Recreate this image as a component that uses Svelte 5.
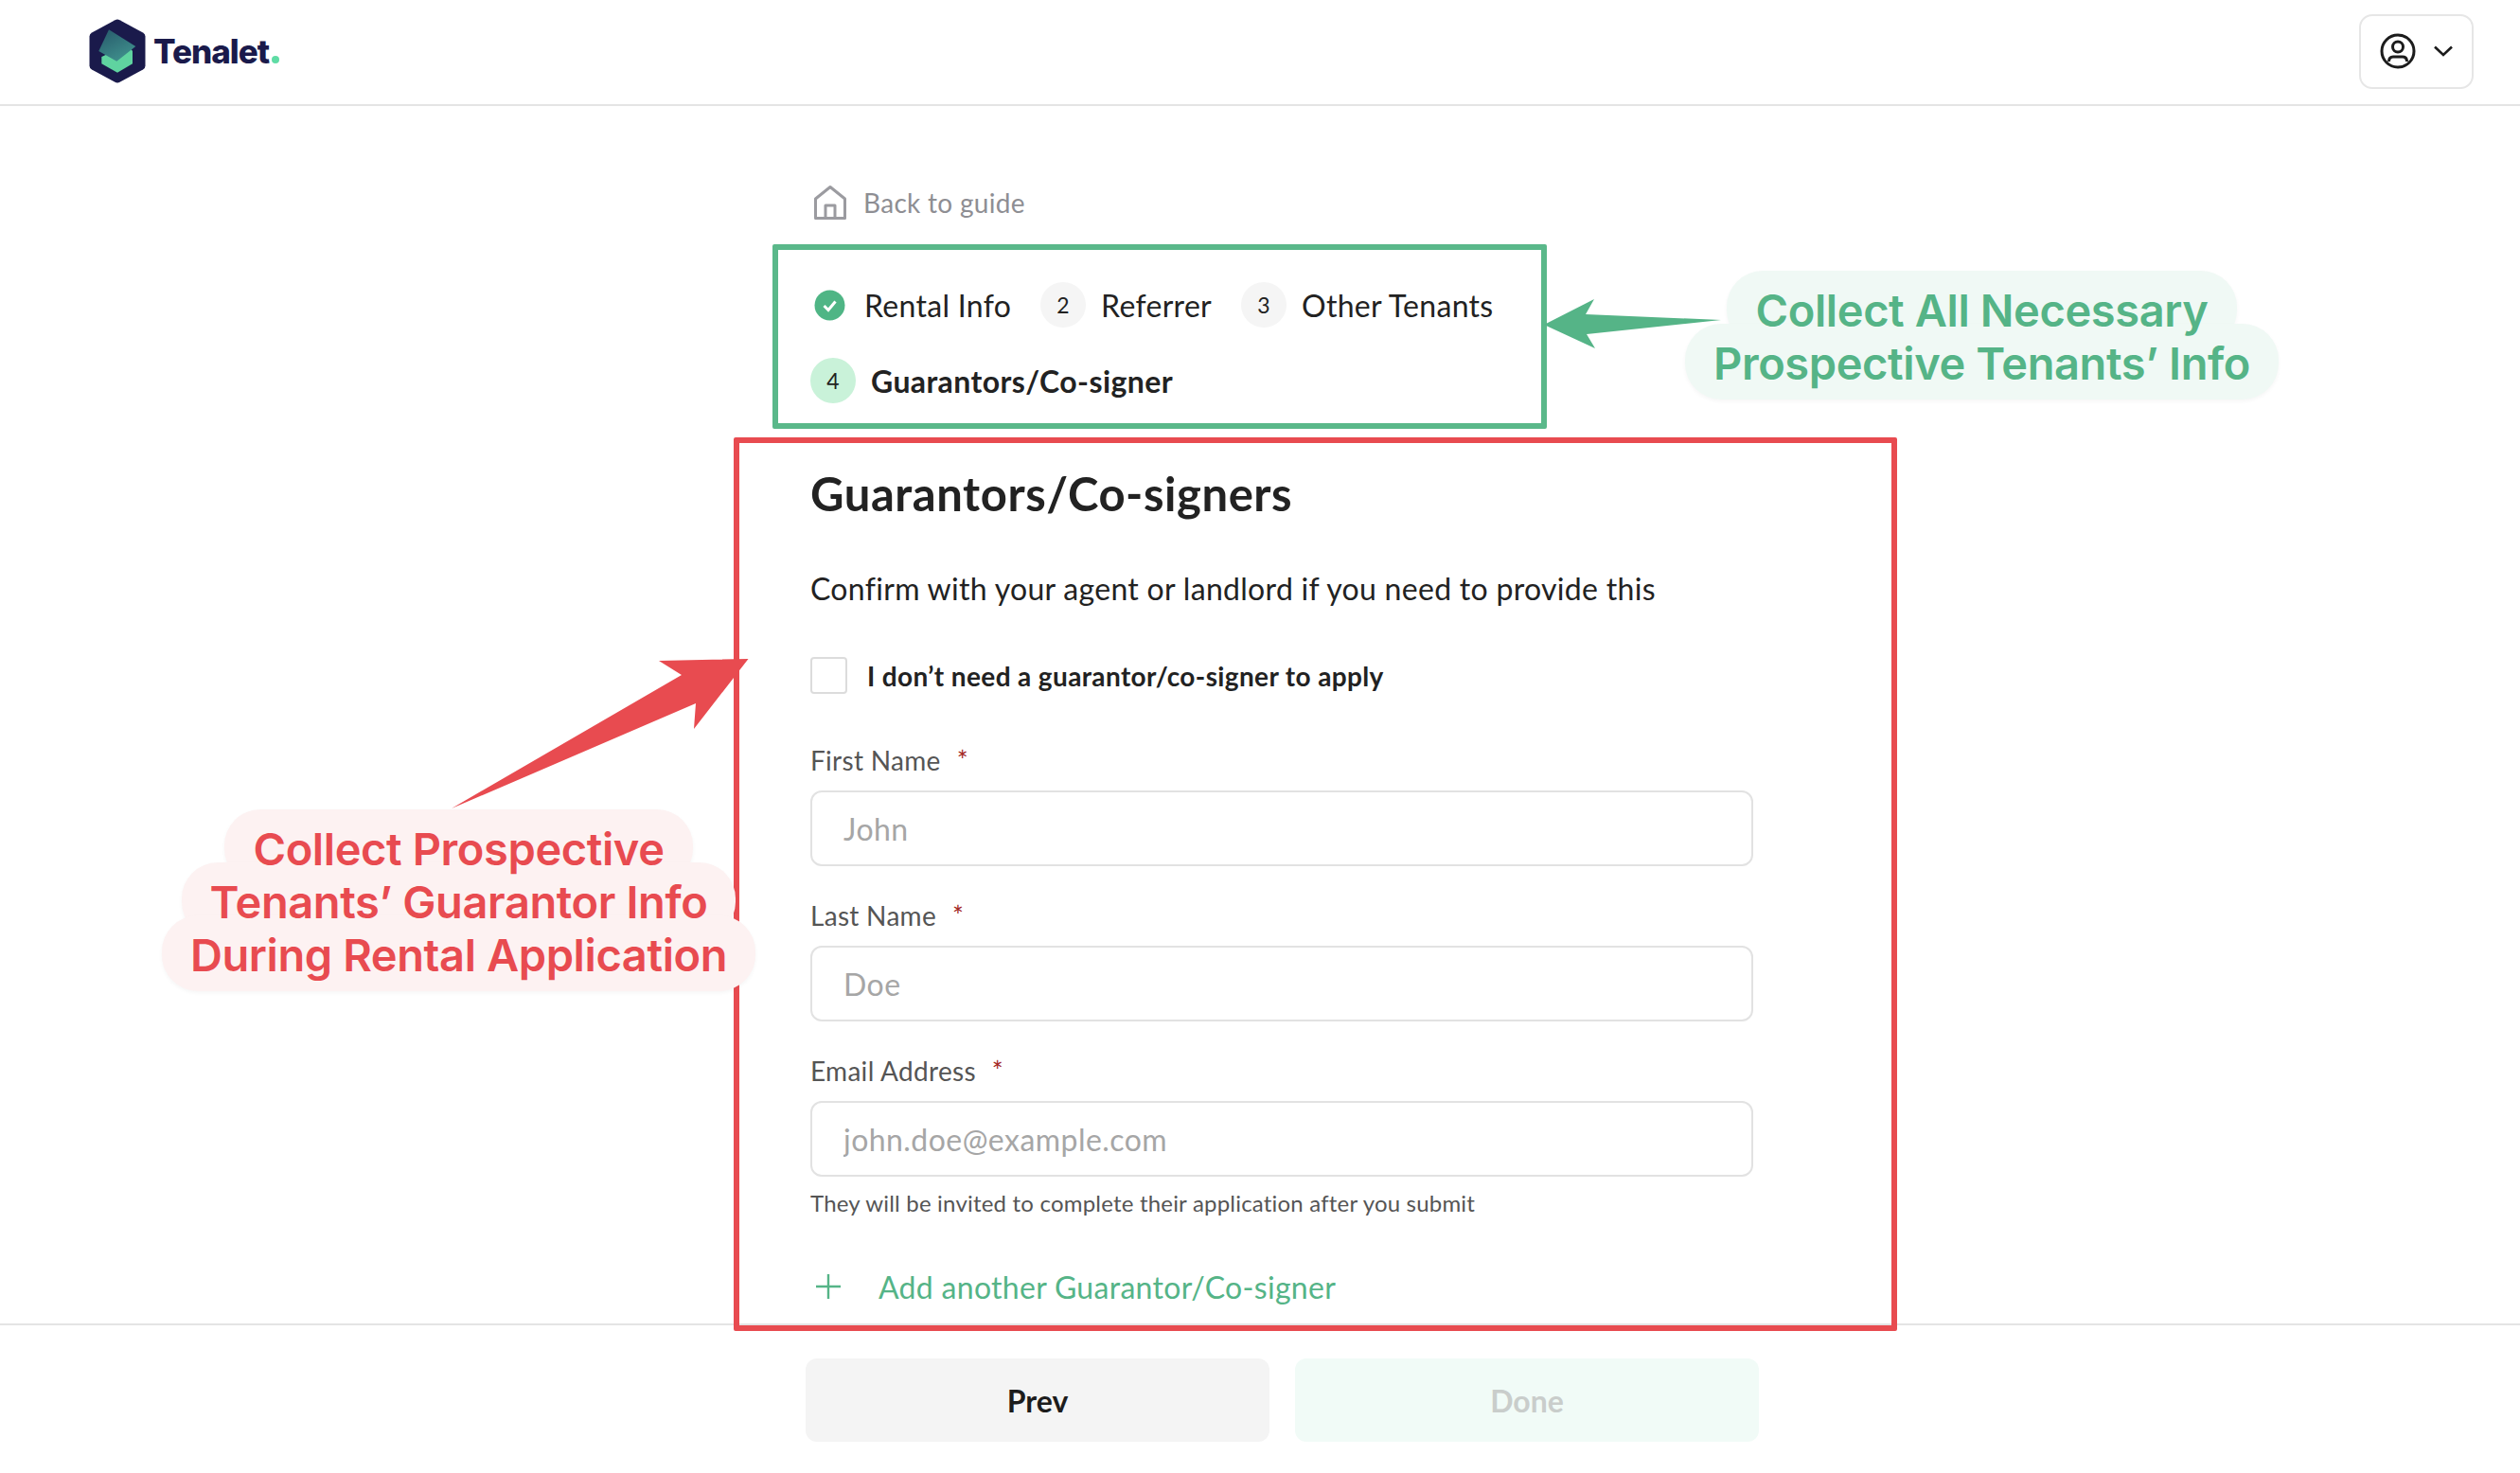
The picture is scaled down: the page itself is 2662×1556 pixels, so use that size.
<script>
    const fields = [
        { label: "First Name", placeholder: "John" },
        { label: "Last Name", placeholder: "Doe" },
        { label: "Email Address", placeholder: "john.doe@example.com" }
    ];
    const steps = [
        { n: 2, label: "Referrer" },
        { n: 3, label: "Other Tenants" }
    ];
</script>

<div class="page">
    <header class="topbar">
        <div class="brand">
            <svg class="logo" width="60" height="68" viewBox="0 0 60 68">
                <defs>
                    <linearGradient id="roof" x1="0" y1="0" x2="0.6" y2="1">
                        <stop offset="0" stop-color="#26586a" />
                        <stop offset="1" stop-color="#3f8f8c" />
                    </linearGradient>
                </defs>
                <path d="M27.5 1.2 Q30 0 32.5 1.2 L57 14.6 Q59.5 16 59.5 18.6 V49.4 Q59.5 52 57 53.4 L32.5 66.8 Q30 68 27.5 66.8 L3 53.4 Q0.5 52 0.5 49.4 V18.6 Q0.5 16 3 14.6 Z" fill="#1a1a4b" />
                <path d="M13.3 40 L41 27.3 L46 34 V47.3 L30 56.7 L13.3 47.3 Z" fill="#5fd3a0" />
                <path d="M21 11.3 L49.3 29 L29.3 44.7 L10.3 34 Z" fill="url(#roof)" />
            </svg>
            <span class="wordmark">Tenalet<span class="dot"></span></span>
        </div>
        <button class="account" aria-label="Account">
            <svg width="38" height="38" viewBox="0 0 38 38" fill="none" stroke="#1c1c1c" stroke-width="3">
                <circle cx="19" cy="19" r="17" />
                <circle cx="19" cy="14.5" r="5.5" />
                <path d="M9.5 30 Q9.5 25 14 25 H24 Q28.5 25 28.5 30" />
            </svg>
            <svg width="22" height="14" viewBox="0 0 22 14" fill="none" stroke="#1c1c1c" stroke-width="2.6">
                <path d="M2 2.5 L11 11 L20 2.5" />
            </svg>
        </button>
    </header>

    <main class="content">
        <a class="back" href="#guide">
            <svg width="36" height="38" viewBox="0 0 36 38" fill="none" stroke="#9b9ba0" stroke-width="3" stroke-linejoin="round">
                <path d="M2.5 35.5 V15 L18 2.5 L33.5 15 V35.5 Z" />
                <path d="M13 35.5 V22 H23 V35.5" />
            </svg>
            <span>Back to guide</span>
        </a>

        <nav class="steps">
            <div class="step-row">
                <div class="step done">
                    <svg width="33" height="33" viewBox="0 0 33 33">
                        <circle cx="16.5" cy="16.5" r="16" fill="#4fb585" />
                        <path d="M10.5 17 L15 21.5 L22.5 12.5" fill="none" stroke="#fff" stroke-width="3" />
                    </svg>
                    <span>Rental Info</span>
                </div>
                {#each steps as step}
                    <div class="step">
                        <span class="num">{step.n}</span>
                        <span>{step.label}</span>
                    </div>
                {/each}
            </div>
            <div class="step current">
                <span class="num">4</span>
                <span>Guarantors/Co-signer</span>
            </div>
        </nav>

        <h1>Guarantors/Co-signers</h1>
        <p class="intro">Confirm with your agent or landlord if you need to provide this</p>

        <label class="skip">
            <input type="checkbox" />
            <span>I don’t need a guarantor/co-signer to apply</span>
        </label>

        <div class="fields">
            {#each fields as field}
                <div class="field">
                    <label for={field.label}>{field.label}<span class="req">*</span></label>
                    <input id={field.label} type="text" placeholder={field.placeholder} />
                </div>
            {/each}
        </div>
        <p class="hint">They will be invited to complete their application after you submit</p>

        <button class="add">
            <svg width="28" height="28" viewBox="0 0 28 28" stroke="#55b487" stroke-width="2.4">
                <path d="M14 1 V27 M1 14 H27" />
            </svg>
            <span>Add another Guarantor/Co-signer</span>
        </button>
    </main>

    <footer class="actions">
        <button class="prev">Prev</button>
        <button class="next" disabled>Done</button>
    </footer>

    <!-- annotations drawn over the screenshot -->
    <div class="mark mark-green"></div>
    <div class="mark mark-red"></div>
    <svg class="arrows" width="2662" height="1556" viewBox="0 0 2662 1556">
        <path d="M1631 343 L1684 316 L1675 332 L1818 338 L1676 353 L1685 368 Z" fill="#55b487" />
        <path d="M790.5 696 L696 698 L720 713 L477 854 L735 743 L733 770 Z" fill="#e84b50" />
    </svg>
    <div class="note note-green">
        <div><span>Collect All Necessary</span></div>
        <div><span>Prospective Tenants’ Info</span></div>
    </div>
    <div class="note note-red">
        <div><span>Collect Prospective</span></div>
        <div><span>Tenants’ Guarantor Info</span></div>
        <div><span>During Rental Application</span></div>
    </div>
</div>

<style>
    :global(body) {
        margin: 0;
        background: #fff;
    }

    .page {
        position: relative;
        width: 2662px;
        height: 1556px;
        overflow: hidden;
        display: flex;
        flex-direction: column;
        font-family: Lato, "Noto Sans", sans-serif;
        color: #222;
    }

    .topbar {
        box-sizing: border-box;
        height: 112px;
        flex: none;
        display: flex;
        align-items: center;
        justify-content: space-between;
        padding: 0 49px 2px 94px;
        border-bottom: 2px solid #e4e4e4;
    }

    .brand {
        display: flex;
        align-items: center;
        gap: 8px;
    }

    .wordmark {
        font-family: Inter, sans-serif;
        font-weight: 800;
        font-size: 35px;
        color: #1a1a4b;
        letter-spacing: -1px;
    }

    .dot {
        display: inline-block;
        width: 8px;
        height: 8px;
        margin-left: 3px;
        border-radius: 50%;
        background: #5fdca5;
    }

    .account {
        box-sizing: border-box;
        width: 121px;
        height: 79px;
        display: flex;
        align-items: center;
        justify-content: center;
        gap: 18px;
        background: #fff;
        border: 2px solid #e6e6e6;
        border-radius: 14px;
    }

    .content {
        flex: 1;
        width: 996px;
        margin-left: 856px;
        padding-top: 84px;
        box-sizing: border-box;
    }

    .back {
        display: flex;
        align-items: center;
        gap: 17px;
        height: 36px;
        margin-left: 3px;
        font-size: 28px;
        letter-spacing: 0.3px;
        color: #8e8e93;
        text-decoration: none;
    }

    .steps {
        margin-top: 66px;
        display: flex;
        flex-direction: column;
        gap: 32px;
    }

    .step-row {
        display: flex;
        gap: 31px;
        margin-left: 4px;
    }

    .step {
        display: flex;
        align-items: center;
        gap: 16px;
        height: 48px;
        font-size: 32px;
        letter-spacing: 0.3px;
    }

    .step.done {
        gap: 20px;
    }

    .num {
        width: 48px;
        height: 48px;
        border-radius: 50%;
        background: #f5f5f5;
        display: flex;
        align-items: center;
        justify-content: center;
        font-size: 23px;
    }

    .step.current {
        font-weight: 700;
        letter-spacing: 0.4px;
    }

    .current .num {
        background: #c9f2d9;
        font-weight: 400;
    }

    h1 {
        margin: 67px 0 0;
        font-size: 49px;
        line-height: 56px;
        font-weight: 700;
        letter-spacing: 0.55px;
    }

    .intro {
        margin: 53px 0 0;
        font-size: 32px;
        line-height: 40px;
        letter-spacing: 0.3px;
    }

    .skip {
        margin-top: 52px;
        display: flex;
        align-items: center;
        gap: 21px;
        font-size: 28px;
        font-weight: 700;
        letter-spacing: 0.37px;
    }

    .skip input {
        appearance: none;
        box-sizing: border-box;
        width: 39px;
        height: 39px;
        margin: 0;
        background: #fff;
        border: 2px solid #dcdcdc;
        border-radius: 4px;
    }

    .fields {
        margin-top: 54px;
        display: flex;
        flex-direction: column;
        gap: 36px;
    }

    .field label {
        display: block;
        font-size: 28px;
        line-height: 32px;
        letter-spacing: 0.3px;
        color: #555;
    }

    .req {
        margin-left: 17px;
        color: #a3271f;
    }

    .field input {
        display: block;
        box-sizing: border-box;
        width: 100%;
        height: 80px;
        margin-top: 16px;
        padding: 0 33px;
        font: inherit;
        font-size: 32px;
        letter-spacing: 0.45px;
        background: #fff;
        border: 2px solid #e2e2e2;
        border-radius: 12px;
    }

    .field input::placeholder {
        color: #a6a6a6;
        opacity: 1;
    }

    .hint {
        margin: 13px 0 0;
        font-size: 24px;
        line-height: 30px;
        letter-spacing: 0.2px;
        color: #555;
    }

    .add {
        margin-top: 53px;
        padding: 0 0 0 5px;
        height: 40px;
        display: flex;
        align-items: center;
        gap: 39px;
        background: none;
        border: 0;
        font: inherit;
        font-size: 32px;
        letter-spacing: 0.3px;
        color: #55b487;
    }

    .actions {
        box-sizing: border-box;
        height: 158px;
        flex: none;
        display: flex;
        gap: 27px;
        padding: 35px 0 0 851px;
        border-top: 2px solid #e4e4e4;
    }

    .actions button {
        width: 490px;
        height: 88px;
        border: 0;
        border-radius: 12px;
        font: inherit;
        font-size: 32px;
        font-weight: 700;
    }

    .prev {
        background: #f4f4f4;
        color: #1c1c1c;
    }

    .next {
        background: #f1fbf7;
        color: #c9cdcb;
    }

    .mark {
        position: absolute;
        box-sizing: border-box;
        border: 6px solid;
        border-radius: 2px;
        pointer-events: none;
    }

    .mark-green {
        left: 816px;
        top: 258px;
        width: 818px;
        height: 195px;
        border-color: #5ab88a;
    }

    .mark-red {
        left: 775px;
        top: 462px;
        width: 1229px;
        height: 944px;
        border-color: #e84b50;
    }

    .arrows {
        position: absolute;
        left: 0;
        top: 0;
        pointer-events: none;
    }

    /* each line gets its own pill behind the text, pills overlap into one cloud */
    .note {
        position: absolute;
        isolation: isolate;
        font-family: Inter, sans-serif;
        font-weight: 600;
        font-size: 47px;
        line-height: 56px;
        text-align: center;
        white-space: nowrap;
        letter-spacing: -0.4px;
    }

    .note span {
        position: relative;
        display: inline-block;
    }

    .note span::before {
        content: "";
        position: absolute;
        inset: -14px -30px -10px;
        z-index: -1;
        border-radius: 38px;
        background: var(--pill);
        box-shadow: 0 2px 4px rgba(0, 0, 0, 0.04);
    }

    .note-green {
        left: 1781px;
        width: 625px;
        top: 300px;
        color: #55b487;
        --pill: #f0f9f5;
    }

    .note-red {
        left: 170px;
        width: 629px;
        top: 869px;
        color: #e84b50;
        --pill: #fdf2f2;
    }
</style>
